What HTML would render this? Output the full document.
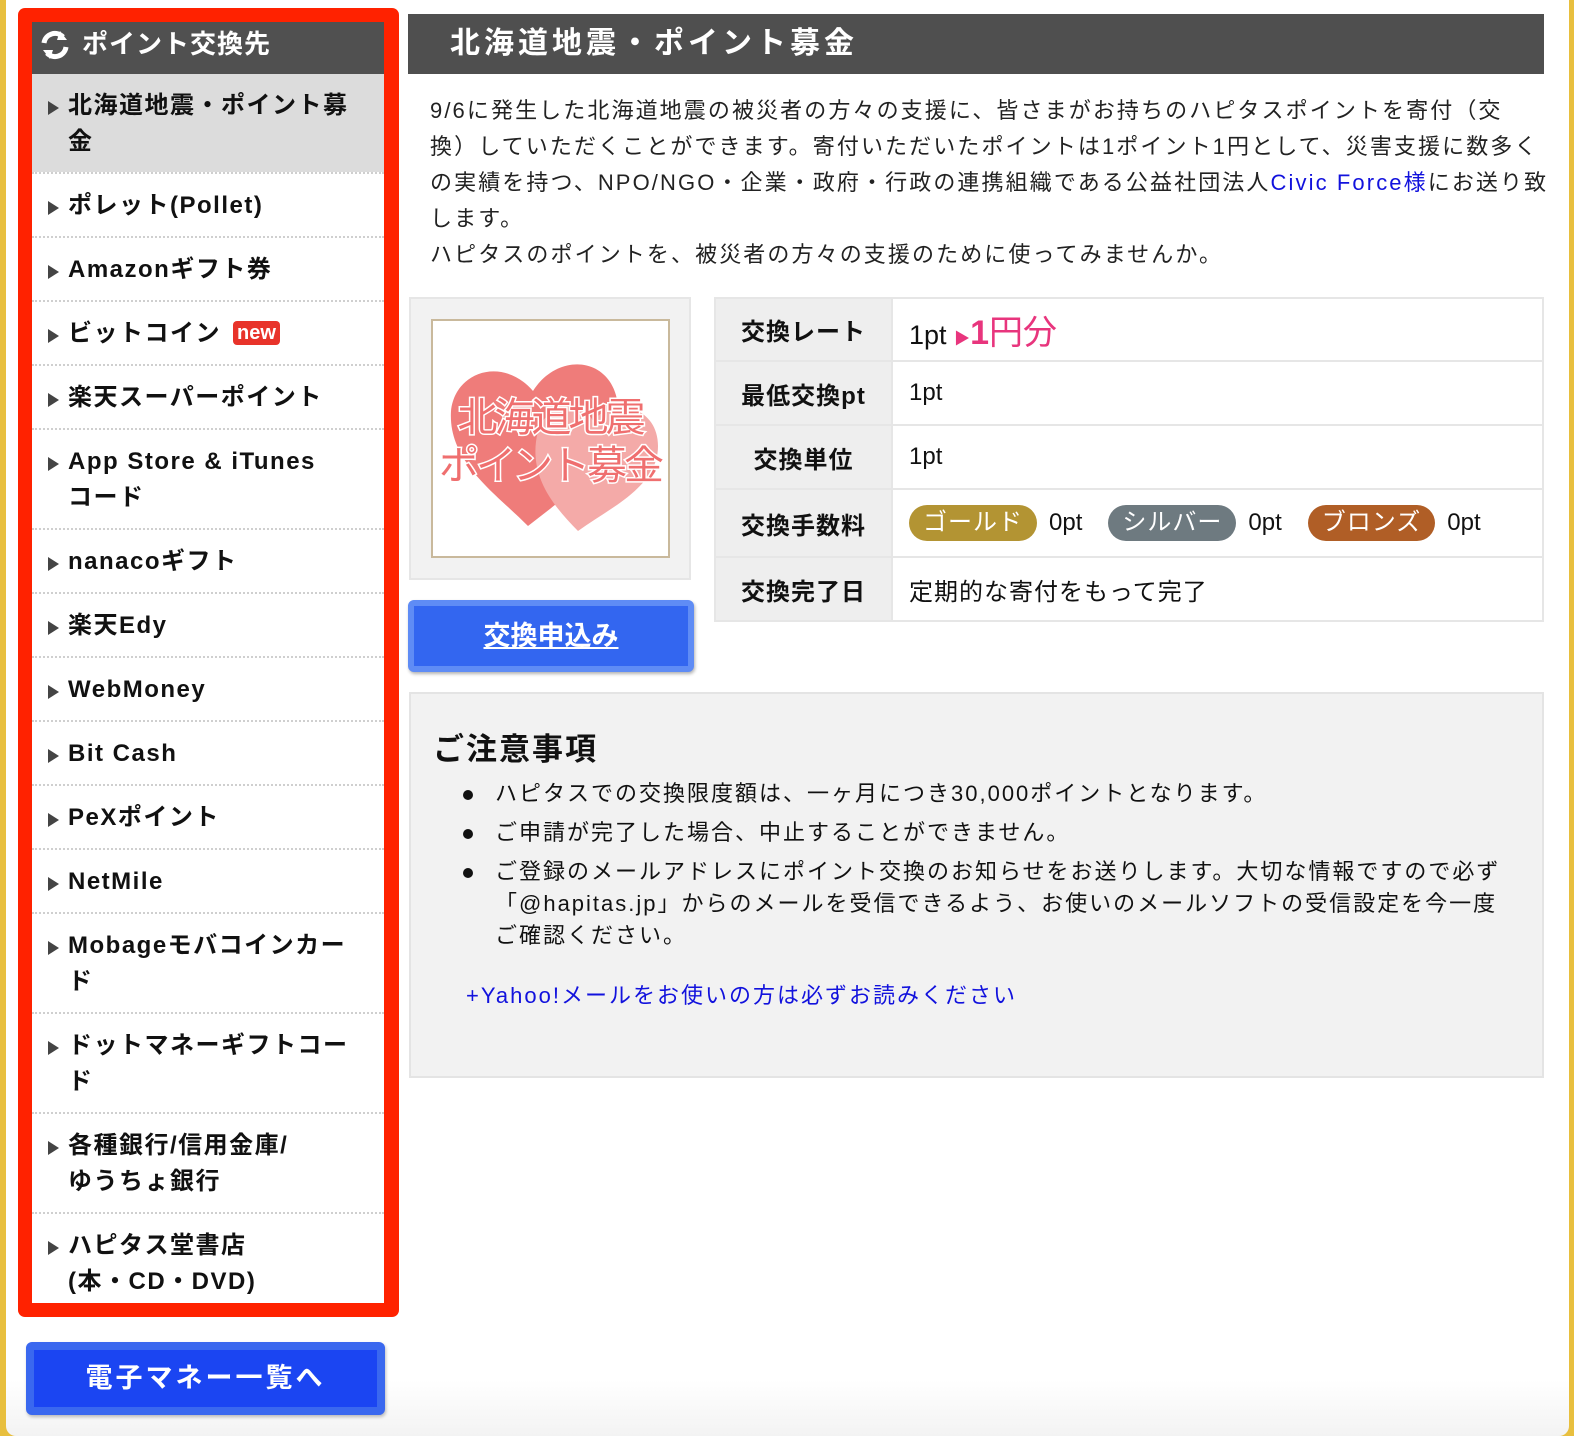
<!DOCTYPE html>
<html><head><meta charset="utf-8">
<style>
*{margin:0;padding:0;box-sizing:border-box}
html,body{width:1574px;height:1436px;overflow:hidden;background:#e8bf3e}
body{font-family:"Liberation Sans","Noto Sans CJK JP",sans-serif;color:#111;position:relative}
#panel{position:absolute;left:6px;top:0;width:1563px;height:1436px;background:linear-gradient(#fff 0,#fff 1380px,#f3f3f3 1436px);border-radius:0 0 10px 10px}
.abs{position:absolute}
#red{left:18px;top:8px;width:381px;height:1309px;background:#ff2200;border-radius:7px}
#side{left:32px;top:22px;width:352px;height:1281px;background:#fff}
#shead{height:52px;background:#505050;color:#fff;font-weight:bold;font-size:26px;line-height:44px;padding-left:50px;position:relative;letter-spacing:1px}
#shead svg{position:absolute;left:6px;top:6px}
.it{position:relative;border-top:2px dotted #cfcfcf;font-weight:bold;font-size:24px;line-height:36px;padding:14px 10px 12px 36px;letter-spacing:1.5px}
.it:before{content:"";position:absolute;left:16px;top:27px;border-left:11px solid #444;border-top:7px solid transparent;border-bottom:7px solid transparent}
.it.first{border-top:none;background:#dcdcdc}
.new{display:inline-block;background:#e8332a;color:#fff;font-size:20px;line-height:24px;padding:0 4px;border-radius:4px;margin-left:12px;vertical-align:2px;letter-spacing:0}
#emb{left:26px;top:1342px;width:359px;height:73px;background:#1b45f2;border:8px solid #3a68ef;border-radius:6px;color:#fff;font-weight:bold;font-size:27px;text-align:center;line-height:56px;letter-spacing:3px;box-shadow:1px 2px 3px rgba(0,0,0,.25)}
#mhead{left:408px;top:14px;width:1136px;height:60px;background:#4f4f4f;color:#fff;font-weight:bold;font-size:30px;line-height:60px;padding-left:42px;letter-spacing:4px}
#intro{left:430px;top:93px;width:1130px;font-size:22px;line-height:36px;letter-spacing:2.1px;color:#222}
a{color:#1212dd;text-decoration:none}
#imgbox{left:409px;top:297px;width:282px;height:283px;background:#f2f2f2;border:2px solid #e6e6e6}
#img{left:20px;top:20px;width:239px;height:239px;background:#fff;border:2px solid #c9b99c;overflow:hidden}
#btn{left:408px;top:600px;width:286px;height:72px;background:#3366f0;border:6px solid #5f8cf5;border-radius:6px;color:#fff;font-size:27px;font-weight:bold;text-align:center;line-height:60px;text-decoration:underline;box-shadow:1px 2px 3px rgba(0,0,0,.3)}
table{position:absolute;left:714px;top:297px;width:830px;border-collapse:collapse}
td{border:2px solid #e6e6e6;font-size:24px;padding:0 16px}
td.l{width:177px;background:#eeeeee;font-weight:bold;text-align:center;font-size:24px;padding:0 6px;letter-spacing:1px}
.b{display:inline-block;color:#fff;border-radius:18px;padding:0 14px;line-height:36px;font-size:24px;margin-right:12px;letter-spacing:1px}
#note{left:409px;top:692px;width:1135px;height:386px;background:#f2f2f2;border:2px solid #e4e4e4}
#note h3{position:absolute;left:22px;top:30px;font-size:31px;font-weight:bold;letter-spacing:2px}
#note ul{position:absolute;left:84px;top:84px;width:1060px;font-size:22px;line-height:32px;letter-spacing:2px;list-style:none}
#note li{margin-bottom:7px;position:relative}
#note li:before{content:"";position:absolute;left:-32px;top:12px;width:10px;height:10px;border-radius:50%;background:#111}
#note .lk{position:absolute;left:55px;top:284px;font-size:22px;letter-spacing:2px}
</style></head><body>
<div id="panel"></div>
<div class="abs" id="red"></div>
<div class="abs" id="side">
 <div id="shead"><svg width="34" height="34" viewBox="0 0 34 34"><path d="M6 15 A11 11 0 0 1 25 9" stroke="#fff" stroke-width="5" fill="none"/><path d="M22 3 L29 12 L19 12Z" fill="#fff"/><path d="M28 19 A11 11 0 0 1 9 25" stroke="#fff" stroke-width="5" fill="none"/><path d="M12 31 L5 22 L15 22Z" fill="#fff"/></svg>ポイント交換先</div>
 <div class="it first">北海道地震・ポイント募<br>金</div>
 <div class="it">ポレット(Pollet)</div>
 <div class="it">Amazonギフト券</div>
 <div class="it">ビットコイン<span class="new">new</span></div>
 <div class="it">楽天スーパーポイント</div>
 <div class="it">App Store &amp; iTunes<br>コード</div>
 <div class="it">nanacoギフト</div>
 <div class="it">楽天Edy</div>
 <div class="it">WebMoney</div>
 <div class="it">Bit Cash</div>
 <div class="it">PeXポイント</div>
 <div class="it">NetMile</div>
 <div class="it">Mobageモバコインカー<br>ド</div>
 <div class="it">ドットマネーギフトコー<br>ド</div>
 <div class="it">各種銀行/信用金庫/<br>ゆうちょ銀行</div>
 <div class="it">ハピタス堂書店<br>(本・CD・DVD)</div>
</div>
<div class="abs" id="emb">電子マネー一覧へ</div>

<div class="abs" id="mhead">北海道地震・ポイント募金</div>
<div class="abs" id="intro">9/6に発生した北海道地震の被災者の方々の支援に、皆さまがお持ちのハピタスポイントを寄付（交<br>換）していただくことができます。寄付いただいたポイントは1ポイント1円として、災害支援に数多く<br>の実績を持つ、NPO/NGO・企業・政府・行政の連携組織である公益社団法人<a>Civic Force様</a>にお送り致<br>します。<br>ハピタスのポイントを、被災者の方々の支援のために使ってみませんか。</div>

<div class="abs" id="imgbox"><div class="abs" id="img">
<svg width="235" height="235" viewBox="0 0 235 235">
<path d="M95 205 C60 170 15 140 18 90 C22 50 70 35 100 70 C125 30 180 35 185 85 C190 135 140 170 95 205Z" fill="#ef7c7a"/>
<path d="M145 210 C115 180 95 150 105 110 C115 80 150 80 160 100 C180 75 225 85 225 125 C225 165 180 185 145 210Z" fill="#f4aaa8"/>
<text x="117" y="110" text-anchor="middle" font-family="Noto Sans CJK JP,sans-serif" font-size="40" fill="#ef6f6f" stroke="#fff" stroke-width="3" paint-order="stroke" letter-spacing="-3">北海道地震</text>
<text x="117" y="158" text-anchor="middle" font-family="Noto Sans CJK JP,sans-serif" font-size="40" fill="#ef6f6f" stroke="#fff" stroke-width="3" paint-order="stroke" letter-spacing="-3">ポイント募金</text>
</svg></div></div>
<div class="abs" id="btn">交換申込み</div>

<table>
<tr style="height:63px"><td class="l">交換レート</td><td style="font-size:27px">1pt <span style="color:#e8357d;font-size:16px">▶</span><span style="color:#e8357d;font-weight:bold;font-size:34px">1</span><span style="color:#e8357d;font-size:34px">円分</span></td></tr>
<tr style="height:64px"><td class="l">最低交換pt</td><td>1pt</td></tr>
<tr style="height:64px"><td class="l">交換単位</td><td>1pt</td></tr>
<tr style="height:68px"><td class="l">交換手数料</td><td><span class="b" style="background:#b39433">ゴールド</span>0pt<span style="display:inline-block;width:26px"></span><span class="b" style="background:#6e7a80">シルバー</span>0pt<span style="display:inline-block;width:26px"></span><span class="b" style="background:#b05e26">ブロンズ</span>0pt</td></tr>
<tr style="height:64px"><td class="l">交換完了日</td><td style="letter-spacing:1px">定期的な寄付をもって完了</td></tr>
</table>

<div class="abs" id="note">
<h3>ご注意事項</h3>
<ul>
<li>ハピタスでの交換限度額は、一ヶ月につき30,000ポイントとなります。</li>
<li>ご申請が完了した場合、中止することができません。</li>
<li>ご登録のメールアドレスにポイント交換のお知らせをお送りします。大切な情報ですので必ず<br>「@hapitas.jp」からのメールを受信できるよう、お使いのメールソフトの受信設定を今一度<br>ご確認ください。</li>
</ul>
<a class="lk">+Yahoo!メールをお使いの方は必ずお読みください</a>
</div>
</body></html>
